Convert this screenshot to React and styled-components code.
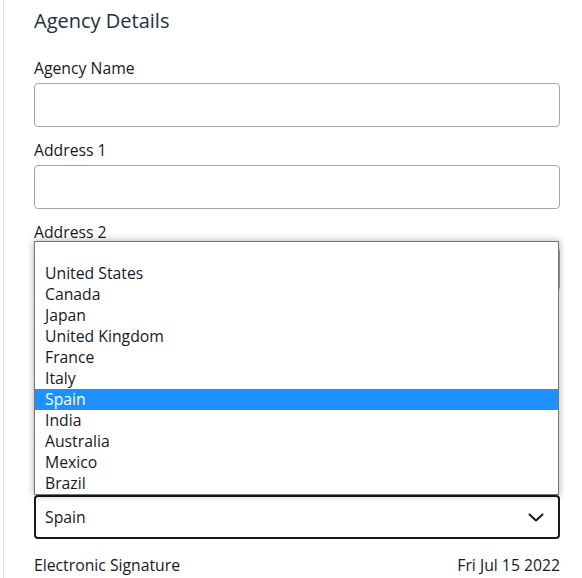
import styled, { createGlobalStyle } from 'styled-components';

const countries = [
  '',
  'United States',
  'Canada',
  'Japan',
  'United Kingdom',
  'France',
  'Italy',
  'Spain',
  'India',
  'Australia',
  'Mexico',
  'Brazil',
];

const selected = 'Spain';

const GlobalStyle = createGlobalStyle`
  body {
    margin: 0;
    background: #fff;
    font-family: "Open Sans", "Liberation Sans", sans-serif;
    color: #16191f;
  }
`;

const App = () => {
  return (
    <>
      <GlobalStyle />
      <Page>
        <Title>Agency Details</Title>
        <Field>
          <Label>Agency Name</Label>
          <Input />
        </Field>
        <Field>
          <Label>Address 1</Label>
          <Input />
        </Field>
        <Field>
          <Label>Address 2</Label>
          <Input />
        </Field>
        {/* the rest of the address fields sit under the open list */}
        <Covered />
        <Field $last>
          <SelectWrap>
            <Options>
              {countries.map((c, i) => (
                <Option key={i} $active={c === selected}>
                  {c}
                </Option>
              ))}
            </Options>
            <Select>
              <span>{selected}</span>
              <svg width="16" height="9" viewBox="0 0 16 9" fill="none">
                <polyline
                  points="1.5,1.5 8,7.5 14.5,1.5"
                  stroke="#16191f"
                  strokeWidth="2"
                  strokeLinecap="round"
                  strokeLinejoin="round"
                />
              </svg>
            </Select>
          </SelectWrap>
        </Field>
        <Footer>
          <span>Electronic Signature</span>
          <span>Fri Jul 15 2022</span>
        </Footer>
      </Page>
    </>
  );
};

export default App;

const Page = styled.div`
  margin-left: 3px;
  border-left: 1px solid #e1e1e1;
  padding: 9px 22px 20px 30px;
  min-height: 560px;
  display: flex;
  flex-direction: column;
`;
const Title = styled.h2`
  margin: 0 0 25px;
  font-size: 20px;
  line-height: 24px;
  font-weight: 400;
  color: #232f3e;
`;
const Field = styled.div`
  display: flex;
  flex-direction: column;
  gap: 5px;
  margin-bottom: ${({ $last }) => ($last ? '16px' : '13px')};
`;
const Label = styled.div`
  font-size: 15.75px;
  line-height: 20px;
  color: #16191f;
`;
const Input = styled.div`
  height: 44px;
  box-sizing: border-box;
  border: 1px solid #a6a6a6;
  border-radius: 4px;
  background: #fff;
`;
const Covered = styled.div`
  height: 191px;
`;
const SelectWrap = styled.div`
  position: relative;
`;
const Options = styled.div`
  position: absolute;
  left: 0;
  right: 1px;
  bottom: 100%;
  background: #fff;
  border: 1px solid #767676;
  box-shadow: 0 0 7px rgba(0, 0, 0, 0.35);
  z-index: 2;
`;
const Option = styled.div`
  height: 21px;
  line-height: 21px;
  padding-left: 10px;
  font-size: 15.75px;
  color: ${({ $active }) => ($active ? '#fff' : '#16191f')};
  background: ${({ $active }) => ($active ? '#1e90ff' : 'transparent')};
`;
const Select = styled.div`
  height: 44px;
  box-sizing: border-box;
  border: 2px solid #16191f;
  border-radius: 4px;
  display: flex;
  align-items: center;
  justify-content: space-between;
  padding: 0 14px 0 9px;
  font-size: 15.75px;
`;
const Footer = styled.div`
  display: flex;
  justify-content: space-between;
  font-size: 15.75px;
  line-height: 20px;
`;
